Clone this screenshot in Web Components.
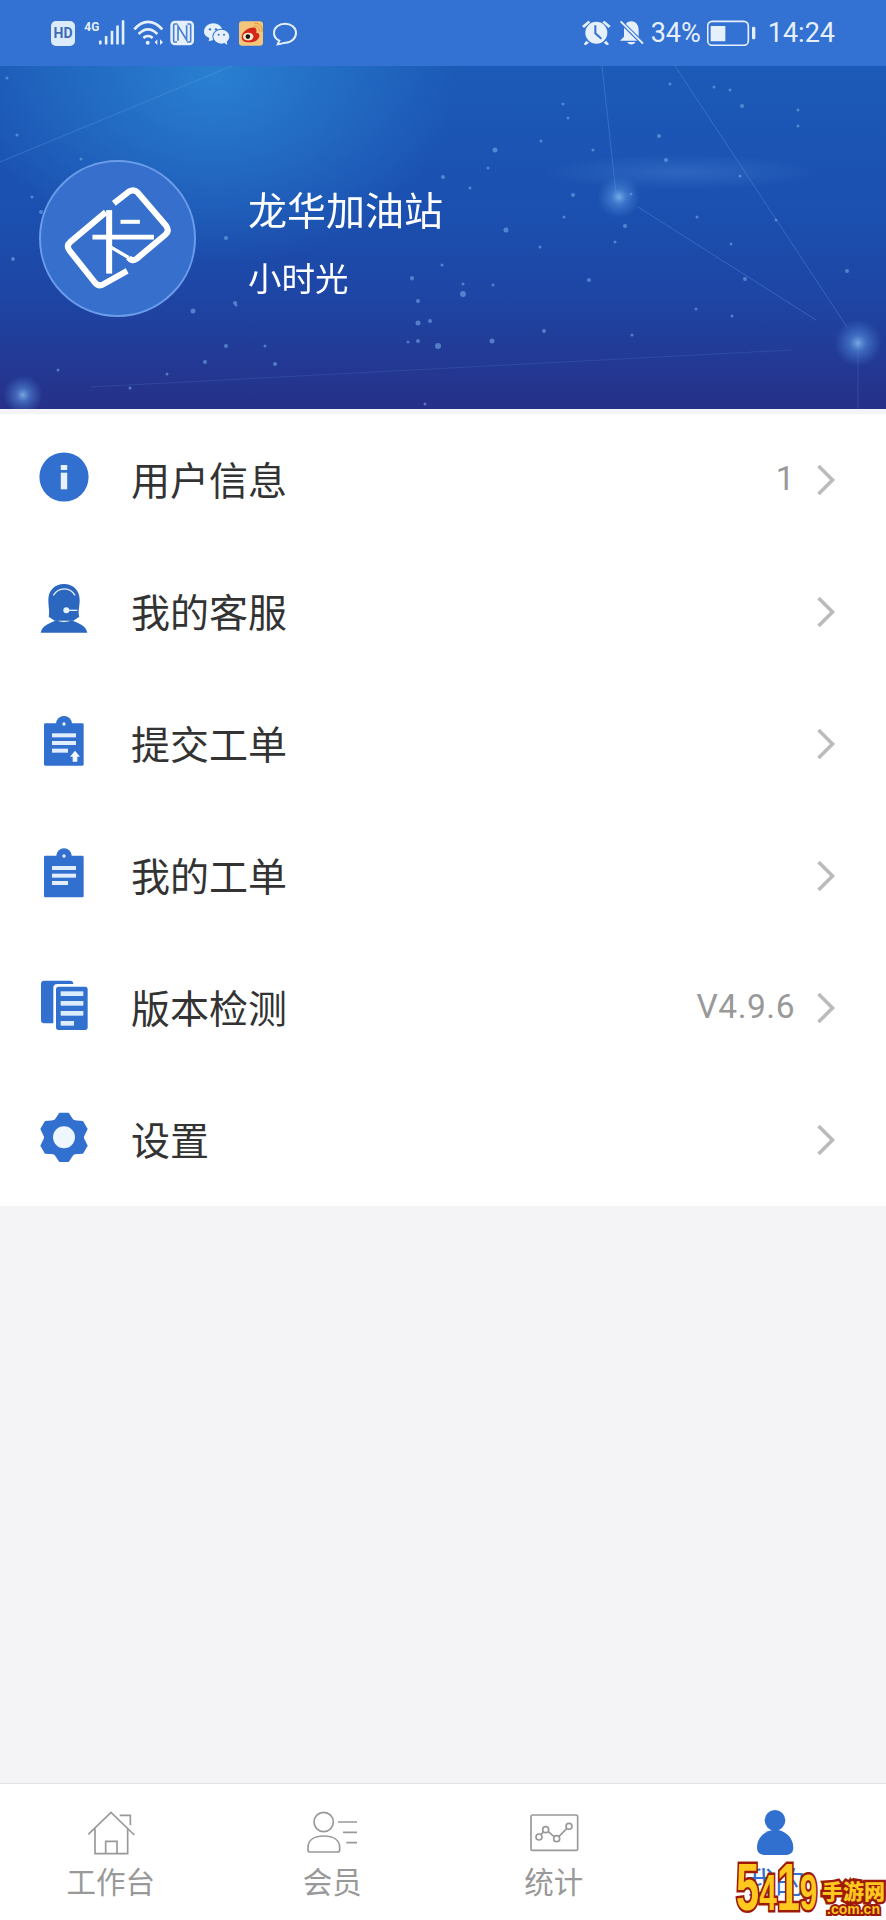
<!DOCTYPE html>
<html lang="zh">
<head>
<meta charset="utf-8">
<title>我的</title>
<style>
    html, body { margin: 0; padding: 0; background: #f4f3f6; }
    body { font-family: "Noto Sans CJK SC", "Noto Sans", sans-serif; }
    svg { display: block; }
    .ico { width: 60px; height: 60px; }
    .tab-ico { width: 64px; height: 52px; }
</style>
</head>
<body>

<app-page>
    <status-bar slot="top"></status-bar>
    <profile-header slot="top" name="龙华加油站" user="小时光"></profile-header>

    <menu-list>
        <menu-row label="用户信息" value="1">
            <svg class="ico" slot="icon" viewBox="0 0 60 60">
                <circle cx="30" cy="30" r="24.6" fill="#3270cf"/>
                <rect x="26.8" y="18" width="6.4" height="5" fill="#e8f2ff"/>
                <rect x="26.8" y="25.7" width="6.4" height="16.6" fill="#e8f2ff"/>
            </svg>
        </menu-row>
        <menu-row label="我的客服">
            <svg class="ico" slot="icon" viewBox="42 447 180 180">
                <path d="M132 462C104 462 85 482 85 510C85 530 90 548 86 560L104 572H160L178 560C173 548 179 530 179 510C179 482 160 462 132 462Z" fill="#2b67bf"/>
                <path d="M62 608C66 586 90 580 110 570C120 578 144 578 154 570C174 580 198 586 202 608Z" fill="#2b67bf"/>
                <path d="M100 496C116 470 150 470 165 496" fill="none" stroke="#e8f2ff" stroke-width="4"/>
                <circle cx="139" cy="541" r="9" fill="#e8f2ff"/>
                <path d="M145 541H172" stroke="#e8f2ff" stroke-width="4"/>
            </svg>
        </menu-row>
        <menu-row label="提交工单">
            <svg class="ico" slot="icon" viewBox="42 63 180 180">
                <circle cx="132" cy="102" r="24" fill="#3270cf"/>
                <rect x="72" y="100" width="119" height="127" rx="4" fill="#3270cf"/>
                <circle cx="132" cy="102" r="5" fill="#e8f2ff"/>
                <rect x="96" y="130" width="72" height="12" fill="#e0eeff"/>
                <rect x="96" y="153" width="72" height="12" fill="#e0eeff"/>
                <rect x="96" y="176" width="48" height="12" fill="#e0eeff"/>
                <path d="M165 182L180 200H172V215H158V200H150Z" fill="#f3f8ff"/>
            </svg>
        </menu-row>
        <menu-row label="我的工单">
            <svg class="ico" slot="icon" viewBox="42 459 180 180">
                <circle cx="132" cy="498" r="23" fill="#3270cf"/>
                <rect x="72" y="497" width="119" height="125" rx="4" fill="#3270cf"/>
                <circle cx="132" cy="498" r="5" fill="#e8f2ff"/>
                <rect x="96" y="528" width="72" height="12" fill="#e0eeff"/>
                <rect x="96" y="551" width="72" height="12" fill="#e0eeff"/>
                <rect x="96" y="573" width="48" height="12" fill="#e0eeff"/>
            </svg>
        </menu-row>
        <menu-row label="版本检测" value="V4.9.6">
            <svg class="ico" slot="icon" viewBox="42 75 180 180">
                <rect x="63" y="92" width="97" height="128" rx="10" fill="#3270cf"/>
                <rect x="100" y="102" width="111" height="146" rx="12" fill="#fff"/>
                <rect x="108" y="110" width="95" height="130" rx="8" fill="#3270cf"/>
                <rect x="122" y="124" width="68" height="14" fill="#dcecff"/>
                <rect x="122" y="153" width="68" height="14" fill="#dcecff"/>
                <rect x="122" y="183" width="68" height="14" fill="#dcecff"/>
                <rect x="122" y="213" width="40" height="14" fill="#dcecff"/>
            </svg>
        </menu-row>
        <menu-row label="设置">
            <svg class="ico" slot="icon" viewBox="42 471 180 180">
                <g fill="#3270cf">
                    <circle cx="132" cy="562" r="60"/>
                    <path d="M102 512L118 488H146L162 512Z"/>
                    <path d="M102 512L118 488H146L162 512Z" transform="rotate(60 132 562)"/>
                    <path d="M102 512L118 488H146L162 512Z" transform="rotate(120 132 562)"/>
                    <path d="M102 512L118 488H146L162 512Z" transform="rotate(180 132 562)"/>
                    <path d="M102 512L118 488H146L162 512Z" transform="rotate(240 132 562)"/>
                    <path d="M102 512L118 488H146L162 512Z" transform="rotate(300 132 562)"/>
                </g>
                <circle cx="132" cy="562" r="33" fill="#eef6ff"/>
            </svg>
        </menu-row>
    </menu-list>

    <tab-bar slot="bottom">
        <tab-item label="工作台">
            <svg class="tab-ico" slot="icon" viewBox="236 110 192 156" fill="none" stroke="#999" stroke-width="5">
                <path d="M264 192L332 126L402 194"/>
                <path d="M358 135H390V165"/>
                <path d="M284 175V250H382V175"/>
                <path d="M316 250V213H350V250"/>
            </svg>
        </tab-item>
        <tab-item label="会员">
            <svg class="tab-ico" slot="icon" viewBox="901 110 192 156" fill="none" stroke="#999" stroke-width="5">
                <circle cx="972" cy="155" r="29"/>
                <path d="M925 232C925 208 945 197 972 197C1000 197 1020 208 1020 232V238Q1020 245 1013 245H932Q925 245 925 238Z"/>
                <path d="M1015 155H1072M1030 186H1072M1040 217H1072"/>
            </svg>
        </tab-item>
        <tab-item label="统计">
            <svg class="tab-ico" slot="icon" viewBox="236 110 192 156" fill="none" stroke="#999" stroke-width="5">
                <rect x="263" y="134" width="140" height="106" rx="5"/>
                <path d="M292 193L302 184M315 184L332 199M347 198L370 175"/>
                <circle cx="287" cy="200" r="9"/>
                <circle cx="307" cy="178" r="9"/>
                <circle cx="340" cy="205" r="9"/>
                <circle cx="377" cy="168" r="9"/>
            </svg>
        </tab-item>
        <tab-item label="我的" active>
            <svg class="tab-ico" slot="icon" viewBox="901 110 192 156" fill="#3270cf">
                <circle cx="997" cy="150" r="31"/>
                <path d="M943 232C943 200 970 178 997 178C1025 178 1052 200 1052 232C1052 248 1040 254 1025 254H970C955 254 943 248 943 232Z"/>
            </svg>
        </tab-item>
    </tab-bar>
    <site-mark slot="bottom"></site-mark>
</app-page>

<script>
class AppPage extends HTMLElement {
    constructor() {
        super();
        this.attachShadow({ mode: 'open' });
        this.shadowRoot.innerHTML = `
            <style>
                :host {
                    display: flex;
                    flex-direction: column;
                    position: relative;
                    height: 1920px;
                    overflow: hidden;
                    background: #f4f3f6;
                }
                .fill { flex: 1; padding-top: 5px; }
            </style>
            <slot name="top"></slot>
            <div class="fill"><slot></slot></div>
            <slot name="bottom"></slot>
        `;
    }
}

class StatusBar extends HTMLElement {
    constructor() {
        super();
        this.attachShadow({ mode: 'open' });
        this.shadowRoot.innerHTML = `
            <style>
                :host {
                    display: flex;
                    align-items: center;
                    justify-content: space-between;
                    height: 66px;
                    padding: 0 51px;
                    background: #3371d3;
                    color: #e6f0fb;
                    font-family: Roboto, "Noto Sans", sans-serif;
                    font-size: 27px;
                }
                svg { display: block; height: 26px; }
                .group { display: flex; align-items: center; }
                .hd {
                    width: 24px;
                    height: 25px;
                    border-radius: 5px;
                    background: #dcebfb;
                    color: #3a6cb8;
                    font-size: 14px;
                    font-weight: 700;
                    line-height: 25px;
                    text-align: center;
                }
            </style>
            <div class="group">
                <div class="hd">HD</div>
                <svg style="margin-left:9px;width:41px" viewBox="250 60 126 78">
                    <text x="251" y="94" font-family="Roboto" font-weight="700" font-size="38" textLength="46" lengthAdjust="spacingAndGlyphs" fill="#e6f0fb">4G</text>
                    <g fill="#e6f0fb">
                        <rect x="296" y="122" width="8" height="12" rx="2"/>
                        <rect x="314" y="108" width="8" height="26" rx="1"/>
                        <rect x="332" y="92" width="8" height="42" rx="1"/>
                        <rect x="349" y="76" width="8" height="58" rx="1"/>
                        <rect x="366" y="60" width="8" height="74" rx="1"/>
                    </g>
                </svg>
                <svg style="margin-left:8px;width:31px" viewBox="399 60 93 78" fill="none" stroke="#e6f0fb" stroke-width="8">
                    <path d="M403 88C428 58 460 58 487 88"/>
                    <path d="M416 102C434 84 454 84 472 102"/>
                    <path d="M430 114C438 106 450 106 458 114"/>
                    <circle cx="443" cy="128" r="6" fill="#e6f0fb" stroke="none"/>
                    <path d="M472 118L464 127L472 135ZM480 118L489 127L480 135Z" fill="#e6f0fb" stroke="none"/>
                </svg>
                <svg style="margin-left:6px;width:24px" viewBox="510 60 72 78">
                    <rect x="511" y="62" width="71" height="74" rx="14" fill="#e6f0fb"/>
                    <path d="M531 72H524Q521 72 521 76V122Q521 126 524 126H531M562 72H569Q572 72 572 76V122Q572 126 569 126H562M534 122V78L560 120V76" fill="none" stroke="#4a80d6" stroke-width="5"/>
                </svg>
                <svg style="margin-left:10px;width:26px" viewBox="612 60 78 78">
                    <path d="M612 96C612 82 624 70 640 70C656 70 668 82 668 96C668 110 656 120 640 120L626 124L628 114C618 110 612 104 612 96Z" fill="#e6f0fb"/>
                    <ellipse cx="664" cy="110" rx="27" ry="24" fill="#3371d3"/>
                    <ellipse cx="664" cy="110" rx="24" ry="21" fill="#e6f0fb"/>
                    <path d="M672 128L682 135L680 124Z" fill="#e6f0fb"/>
                    <circle cx="630" cy="88" r="3.5" fill="#3371d3"/>
                    <circle cx="648" cy="88" r="3.5" fill="#3371d3"/>
                    <circle cx="656" cy="104" r="3" fill="#3371d3"/>
                    <circle cx="672" cy="104" r="3" fill="#3371d3"/>
                </svg>
                <svg style="margin-left:9px;width:24px" viewBox="717 60 73 78">
                    <rect x="717" y="63" width="73" height="75" rx="10" fill="#f5c67a"/>
                    <path d="M725 112C725 96 744 82 760 82C770 82 772 90 769 98C782 98 782 112 772 120C760 130 725 132 725 112Z" fill="#d4261a"/>
                    <ellipse cx="745" cy="110" rx="16" ry="12" fill="#fbe9d0"/>
                    <circle cx="744" cy="110" r="7" fill="#1a1412"/>
                    <path d="M763 78C773 76 781 84 780 95M765 70C780 68 790 80 787 96" fill="none" stroke="#e8902c" stroke-width="3"/>
                </svg>
                <svg style="margin-left:10px;width:25px" viewBox="820 60 75 78">
                    <path d="M856 71C838 71 823 83 823 99C823 110 830 118 839 122L834 133C844 132 852 128 858 128C875 128 889 115 889 99C889 83 874 71 856 71Z" fill="none" stroke="#e6f0fb" stroke-width="6"/>
                </svg>
            </div>
            <div class="group">
                <svg style="width:29px" viewBox="415 60 87 78" fill="#e6f0fb">
                    <circle cx="458" cy="98" r="33"/>
                    <path d="M415 78L434 62L440 67L421 84ZM501 78L482 62L476 67L495 84ZM428 122L420 133L426 136L436 128ZM488 122L496 133L490 136L480 128Z"/>
                    <path d="M455 76V100L473 116" fill="none" stroke="#3371d3" stroke-width="6"/>
                </svg>
                <svg style="margin-left:8px;width:25px" viewBox="525 60 75 78" fill="#e6f0fb">
                    <path d="M562 64C546 64 540 78 540 92V110L528 122H596L584 110V92C584 78 578 64 562 64Z"/>
                    <path d="M550 126C552 136 572 136 574 126Z"/>
                    <path d="M527 62L598 132" stroke="#3371d3" stroke-width="12"/>
                    <path d="M530 64L597 131" stroke="#e6f0fb" stroke-width="6"/>
                </svg>
                <span style="margin-left:7px">34%</span>
                <svg style="margin-left:6px;width:49px" viewBox="793 60 147 78">
                    <rect x="795" y="64" width="122" height="72" rx="14" fill="none" stroke="#e6f0fb" stroke-width="5"/>
                    <path d="M806 78H848V124H806Q804 124 804 122V80Q804 78 806 78Z" fill="#e6f0fb"/>
                    <rect x="928" y="80" width="10" height="38" rx="4" fill="#e6f0fb"/>
                </svg>
                <span style="margin-left:12px">14:24</span>
            </div>
        `;
    }
}

class ProfileHeader extends HTMLElement {
    constructor() {
        super();
        this.attachShadow({ mode: 'open' });
    }

    connectedCallback() {
        this.render();
    }

    starField() {
        // x, y (from the top of the header), radius
        const stars = [[7,12,1.5],[17,69,1.5],[81,93,1.5],[32,131,1.5],[41,146,2],[13,193,2],[670,18,1.5],[714,21,1.5],[742,40,2],[563,38,1.5],[568,52,1.5],[659,70,2],[495,84,2.5],[541,75,1.5],[593,84,1.5],[488,102,1.5],[443,111,2],[470,122,1.5],[666,94,2],[730,24,1.5],[798,44,1.5],[798,60,1.5],[740,110,1.5],[573,129,2],[631,128,1.5],[697,151,1.5],[564,151,1.5],[625,160,2],[506,164,2.5],[540,181,1.5],[615,176,1.5],[696,243,1.5],[776,154,1.5],[442,199,1.5],[412,212,2],[463,218,1.5],[418,235,2],[412,213,1.5],[418,275,2],[236,239,1.5],[226,172,2],[226,280,2],[193,245,2.5],[205,296,2],[265,280,1.5],[235,237,2],[275,298,2],[130,322,1.5],[58,304,1.5],[167,308,1.5],[493,219,1.5],[544,265,2],[408,276,1.5],[430,255,2],[492,275,2.5],[463,228,3],[418,257,2.5],[438,280,3],[632,269,1.5],[732,250,1.5],[847,205,2],[589,214,2],[745,213,2],[731,178,1.5],[425,338,1.5]];
        return stars.map(([x, y, r]) => `<circle cx="${x}" cy="${y}" r="${r}"/>`).join('');
    }

    render() {
        const name = this.getAttribute('name') || '';
        const user = this.getAttribute('user') || '';

        this.shadowRoot.innerHTML = `
            <style>
                :host {
                    display: flex;
                    align-items: center;
                    position: relative;
                    height: 343px;
                    padding: 0 0 0 39px;
                    box-sizing: border-box;
                    overflow: hidden;
                    color: #fff;
                    background:
                        radial-gradient(ellipse 240px 190px at 215px 10px, rgba(46,140,218,.75), rgba(46,140,218,0)),
                        linear-gradient(180deg, #1c5ab7 0%, #1b50b0 42%, #1e45a4 68%, #263088 100%);
                }
                .bg { position: absolute; left: 0; top: 0; width: 886px; height: 343px; }
                .stars { filter: blur(.7px); }
                .avatar {
                    position: relative;
                    width: 157px;
                    height: 157px;
                    margin-top: 2px;
                    box-sizing: border-box;
                    border: 2px solid #6b9cea;
                    border-radius: 50%;
                    background: #3670cc;
                    flex: none;
                }
                .avatar svg { position: absolute; left: -2px; top: -2px; width: 157px; height: 157px; }
                .info { position: relative; margin: 6px 0 0 52px; }
                .name { font-size: 39px; line-height: 50px; }
                .user { font-size: 33.5px; line-height: 44px; margin-top: 22px; }
            </style>
            <svg class="bg" viewBox="0 0 886 343">
                <defs>
                    <radialGradient id="glow">
                        <stop offset="0" stop-color="#8fc3f5" stop-opacity=".8"/>
                        <stop offset=".35" stop-color="#5d9be6" stop-opacity=".5"/>
                        <stop offset="1" stop-color="#4a86dc" stop-opacity="0"/>
                    </radialGradient>
                    <radialGradient id="band">
                        <stop offset="0" stop-color="#5a94e4" stop-opacity=".28"/>
                        <stop offset="1" stop-color="#5a94e4" stop-opacity="0"/>
                    </radialGradient>
                </defs>
                <ellipse cx="680" cy="106" rx="140" ry="18" fill="url(#band)"/>
                <g stroke="#6ea6ea" stroke-width="1" fill="none" opacity=".32">
                    <path d="M0 96L232 0"/>
                    <path d="M675 0L847 261"/>
                    <path d="M602 0L616 127"/>
                    <path d="M638 141L816 254"/>
                    <path d="M90 321L791 284" opacity=".5"/>
                    <path d="M858 277V343" opacity=".6"/>
                </g>
                <g class="stars" fill="#7fb2ee" opacity=".55">${this.starField()}</g>
                <circle cx="619" cy="131" r="22" fill="url(#glow)"/>
                <circle cx="858" cy="277" r="24" fill="url(#glow)"/>
                <circle cx="23" cy="329" r="20" fill="url(#glow)"/>
            </svg>
            <div class="avatar">
                <svg viewBox="58 60 470 470" fill="none" stroke="#fff" stroke-linejoin="round">
                    <path d="M258 216L152 305Q138 317 150 332L225 426Q238 442 254 430L322 392" stroke-width="18"/>
                    <path d="M282 190L328 154Q342 146 354 158L438 256Q450 272 436 284L350 356Q336 366 326 352" stroke-width="18"/>
                    <path d="M268 210V400" stroke-width="18"/>
                    <path d="M218 291H402" stroke-width="14"/>
                    <path d="M302 245H360" stroke-width="12"/>
                    <path d="M268 318L326 352" stroke-width="10"/>
                </svg>
            </div>
            <div class="info">
                <div class="name">${name}</div>
                <div class="user">${user}</div>
            </div>
        `;
    }
}

class MenuList extends HTMLElement {
    constructor() {
        super();
        this.attachShadow({ mode: 'open' });
        this.shadowRoot.innerHTML = `
            <style>
                :host { display: block; background: #fff; }
            </style>
            <slot></slot>
        `;
    }
}

class MenuRow extends HTMLElement {
    constructor() {
        super();
        this.attachShadow({ mode: 'open' });
    }

    connectedCallback() {
        const label = this.getAttribute('label') || '';
        const value = this.getAttribute('value');

        this.shadowRoot.innerHTML = `
            <style>
                :host {
                    display: flex;
                    align-items: center;
                    height: 132px;
                    padding: 0 50px 0 34px;
                    color: #333;
                    font-family: "Noto Sans CJK SC", "Noto Sans", sans-serif;
                }
                .icon { width: 60px; height: 60px; margin-bottom: 6px; flex: none; }
                .label { flex: 1; margin: 0 0 4px 37px; font-size: 39px; line-height: 50px; }
                .value {
                    margin: 0 21px 4px 0;
                    color: #999;
                    font-family: Roboto, Lato, sans-serif;
                    font-size: 33.5px;
                    letter-spacing: .5px;
                }
                svg { display: block; width: 20px; height: 32px; flex: none; }
            </style>
            <div class="icon"><slot name="icon"></slot></div>
            <div class="label">${label}</div>
            ${value ? `<div class="value">${value}</div>` : ''}
            <svg viewBox="0 0 20 32" fill="none" stroke="#bbb" stroke-width="3.6">
                <path d="M2.5 2L16.5 16L2.5 30"/>
            </svg>
        `;
    }
}

class TabBar extends HTMLElement {
    constructor() {
        super();
        this.attachShadow({ mode: 'open' });
        this.shadowRoot.innerHTML = `
            <style>
                :host {
                    display: grid;
                    grid-template-columns: repeat(4, 1fr);
                    height: 137px;
                    box-sizing: border-box;
                    border-top: 1px solid #e3e3e6;
                    background: #fff;
                }
            </style>
            <slot></slot>
        `;
    }
}

class TabItem extends HTMLElement {
    constructor() {
        super();
        this.attachShadow({ mode: 'open' });
    }

    connectedCallback() {
        const label = this.getAttribute('label') || '';
        const colour = this.hasAttribute('active') ? '#3270cf' : '#999';

        this.shadowRoot.innerHTML = `
            <style>
                :host {
                    display: flex;
                    flex-direction: column;
                    align-items: center;
                    padding-top: 23px;
                    font-family: "Noto Sans CJK SC", "Noto Sans", sans-serif;
                }
                .label { margin-top: 3px; font-size: 29.5px; line-height: 36px; color: ${colour}; }
            </style>
            <slot name="icon"></slot>
            <div class="label">${label}</div>
        `;
    }
}

class SiteMark extends HTMLElement {
    constructor() {
        super();
        this.attachShadow({ mode: 'open' });
        this.shadowRoot.innerHTML = `
            <style>
                :host {
                    display: flex;
                    align-items: flex-end;
                    position: absolute;
                    right: 0;
                    bottom: 3px;
                    width: 150px;
                    height: 50px;
                    font-family: "Liberation Sans", "Noto Sans CJK SC", sans-serif;
                    font-weight: 700;
                }
                .num, .cn, .en {
                    -webkit-text-stroke: 5px #9c1a06;
                    paint-order: stroke fill;
                    color: #ffc81e;
                }
                .num {
                    display: block;
                    flex: none;
                    width: 85px;
                    font-size: 66px;
                    line-height: 48px;
                    transform: scaleX(.63);
                    transform-origin: left bottom;
                    white-space: nowrap;
                }
                .num b { font-size: 50px; }
                .side { display: flex; flex-direction: column; align-items: center; width: 65px; }
                .cn { font-family: "Noto Sans CJK SC", sans-serif; font-size: 21px; line-height: 24px; white-space: nowrap; font-weight: 900; }
                .en { font-size: 14px; line-height: 15px; white-space: nowrap; -webkit-text-stroke-width: 4px; }
            </style>
            <span class="num">5<b>4</b>1<b>9</b></span>
            <div class="side">
                <span class="cn">手游网</span>
                <span class="en">.com.cn</span>
            </div>
        `;
    }
}

customElements.define('app-page', AppPage);
customElements.define('status-bar', StatusBar);
customElements.define('profile-header', ProfileHeader);
customElements.define('menu-list', MenuList);
customElements.define('menu-row', MenuRow);
customElements.define('tab-bar', TabBar);
customElements.define('tab-item', TabItem);
customElements.define('site-mark', SiteMark);
</script>
</body>
</html>
